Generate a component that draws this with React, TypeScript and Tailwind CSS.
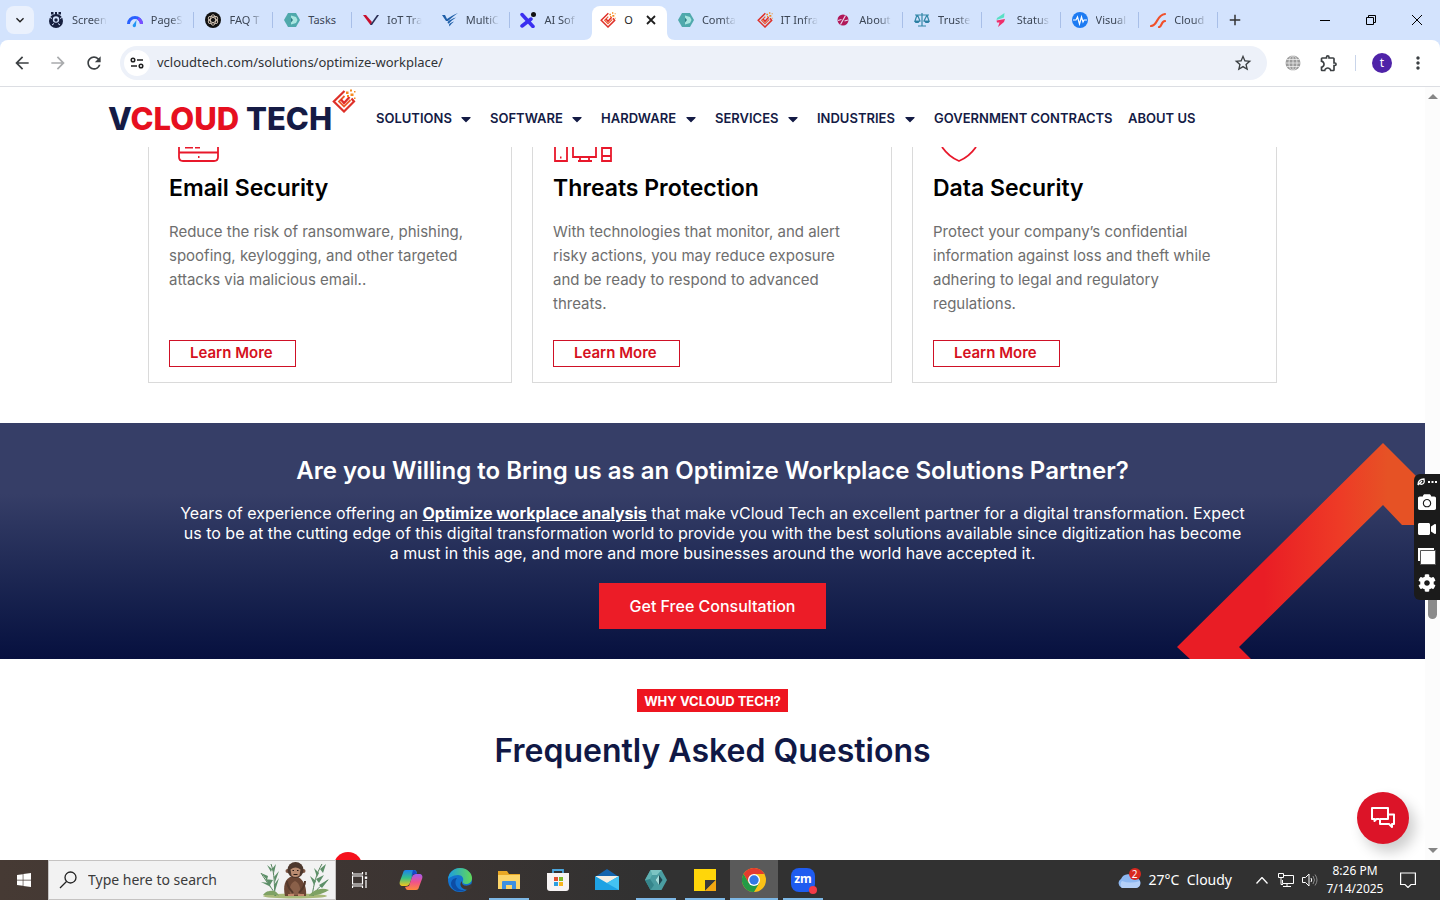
import type { ReactNode } from "react"
import { FaCamera, FaCaretDown, FaCog, FaVideo, FaWindows } from "react-icons/fa"
import { MdAdd, MdArrowBack, MdArrowForward, MdKeyboardArrowDown, MdMoreVert, MdOutlineExtension, MdRefresh, MdStarBorder } from "react-icons/md"

const DiamondLogo = ({ className }: { className: string }) => (
  <svg viewBox="0 0 24 24" className={className} fill="none">
    <path d="M12.500 2 1.800 12.500 12 22.500l10-10-2.500-3" stroke="#de3029" strokeWidth="2.200" />
    <path d="M12.500 7 7 12.500l5 5 6.500-6.500" stroke="#ee5a2a" strokeWidth="1.800" />
    <path d="m9 10.500 3 3.500 5.500-6" stroke="#e02a28" strokeWidth="2.200" />
    <path d="M14 2.500h2.500V5H14zM18 .5h2v2h-2zM18.500 4.500h3V7h-3zM15 6h2v2h-2zM22 2h1.500v1.500H22zM22 8.500h1.500V10H22z" fill="#f58a1f" />
  </svg>
)

const HexLogo = ({ className }: { className: string }) => (
  <svg viewBox="0 0 24 24" className={className}>
    <path d="M6.500 2h11L23 12l-5.500 10h-11L1 12z" fill="#4a9da1" />
    <path d="M1 12l5-1 4 6-3.500 5z" fill="#35858b" />
    <path d="M6.500 2h11L13 7H8z" fill="#7cc4c3" />
    <path d="M6.500 2 1 12l5-1 2-4z" fill="#5eb0b1" />
    <path d="m15 7 3.500 5-3.500 5-3.500-5z" fill="#1f4650" />
    <path d="M15 7v10l-3.500-5z" fill="#a5dedb" />
  </svg>
)

const icons: Record<string, ReactNode> = {
  paw: <svg viewBox="0 0 16 16" className="size-4"><circle cx="8" cy="9" r="7" fill="#17203f" /><circle cx="8" cy="7.500" r="3.200" fill="#d3e3fd" /><circle cx="8" cy="8" r="1.700" fill="#17203f" /><path d="M3 0h2.500v2.500H3zM7 0h2v3H7zM10.500 0H13v2.500h-2.500z" fill="#17203f" /><path d="m1 5 3 1.500M15 5l-3 1.500M4 13l2-1.500M12 13l-2-1.500" stroke="#d3e3fd" /></svg>,
  speed: <svg viewBox="0 0 16 16" className="size-4"><path d="M1.500 12a6.500 6.500 0 0 1 13 0" fill="none" stroke="#2962ff" strokeWidth="3" /><path d="M11 6.500a6.500 6.500 0 0 1 3.500 5.500" fill="none" stroke="#7c4dff" strokeWidth="3" /><path d="m9.500 8-3 4a1.700 1.700 0 1 0 2.500 1z" fill="#2196f3" /></svg>,
  gpt: <svg viewBox="0 0 16 16" className="size-4"><circle cx="8" cy="8" r="8" fill="#111" /><g fill="none" stroke="#d9c9b8" strokeWidth=".9"><ellipse cx="8" cy="8" rx="2.500" ry="5.200" /><ellipse cx="8" cy="8" rx="2.500" ry="5.200" transform="rotate(60 8 8)" /><ellipse cx="8" cy="8" rx="2.500" ry="5.200" transform="rotate(120 8 8)" /></g></svg>,
  hex: <svg viewBox="0 0 16 16" className="size-4"><path d="M4 1h8l4 7-4 7H4L0 8z" fill="#4fa9ac" /><path d="M7 3.500 12 5l1.500 3-1.500 3-5 1.500z" fill="#a9e6e0" /><path d="m7 5.500 2 2.500-2 2.500z" fill="#2f7d84" /></svg>,
  vee: <svg viewBox="0 0 16 16" className="size-4"><path d="M0 3h3l6 7-1.500 3z" fill="#c8102e" /><path d="M7 13 14 3h2l-7 10z" fill="#2a2f55" /></svg>,
  wing: <svg viewBox="0 0 16 16" className="size-4" fill="#1f5fa8"><path d="M0 3h3l2 4C8 5 11 3 16 1c-4 3-7 5-10 8H4z" /><path d="M5.500 10c2-2 5-3.500 8.500-4.500C11 7.500 9 9 7 11.500H6z" /><path d="M7 12.500c1-1.500 3-2.500 5-3-2 1.500-3 3-4.500 5z" /></svg>,
  ex: <svg viewBox="0 0 16 16" className="size-4"><path d="m2 2.500 11 12M11 7 2 14" stroke="#3a2ff0" strokeWidth="3.500" strokeLinecap="round" /><circle cx="13.500" cy="2.500" r="2.500" fill="#111" /></svg>,
  diamond: <DiamondLogo className="size-4" />,
  ball: <svg viewBox="0 0 16 16" className="size-4"><circle cx="8" cy="8" r="5.500" fill="#b01657" /><path d="m5.500 12.500 5-9M3 8.500l3.500-1M9.500 9l3.500-1" stroke="#e9d6ee" strokeWidth="1.200" /></svg>,
  scales: <svg viewBox="0 0 16 16" className="size-4"><path d="M8 1v13M1 3h14M4 14h8M3 3 1 9h5L3.500 3M13 3l-3 6h5l-2-6" fill="none" stroke="#3387a8" strokeWidth="1.200" /><path d="M0 9h6l-1.500 2h-3zM10 9h6l-1.500 2h-3z" fill="#2b7fa3" /></svg>,
  bolt: <svg viewBox="0 0 16 16" className="size-4"><path d="M11.500 1 4 6l-.5 2L11 5.500z" fill="#59e0c5" /><path d="M3.500 8.500 12 7l-1 3-6 5 1.500-4.500H4z" fill="#ef2f6b" /></svg>,
  pulse: <svg viewBox="0 0 16 16" className="size-4"><circle cx="8" cy="8" r="8" fill="#1d7bf2" /><path d="M1 8h3l1.500-3 2 7L9.500 5l1.500 5 1-2h3" fill="none" stroke="#fff" strokeWidth="1.200" /></svg>,
  slash: <svg viewBox="0 0 16 16" className="size-4"><path d="M1 14c7 0 5-11 14-12M9 15c3 0 2-6 6-6" fill="none" stroke="#f0502a" strokeWidth="2.200" strokeLinecap="round" /></svg>,
}

const tabs = [
  { title: "Screen", icon: "paw" },
  { title: "PageS", icon: "speed" },
  { title: "FAQ T", icon: "gpt" },
  { title: "Tasks", icon: "hex", short: true },
  { title: "IoT Tra", icon: "vee" },
  { title: "MultiC", icon: "wing" },
  { title: "AI Sof", icon: "ex" },
  { title: "O", icon: "diamond", active: true },
  { title: "Comta", icon: "hex" },
  { title: "IT Infra", icon: "diamond" },
  { title: "About", icon: "ball" },
  { title: "Truste", icon: "scales" },
  { title: "Status", icon: "bolt" },
  { title: "Visual", icon: "pulse" },
  { title: "Cloud", icon: "slash" },
]

const TabStrip = () => (
  <div className="flex h-10 shrink-0 items-center bg-[#d3e3fd]">
    <button aria-label="Search tabs" className="ml-1.5 flex size-7 shrink-0 items-center justify-center rounded-lg bg-[#eaf1fd]">
      <MdKeyboardArrowDown className="size-4 text-[#1f1f1f]" />
    </button>
    <ul className="ml-[3px] flex h-full min-w-0 flex-1">
      {tabs.map((tab, i) => tab.active ? (
        <li key={i} className="flex min-w-0 flex-1 items-end">
          <div className="relative ml-1 flex h-[34px] min-w-0 flex-1 items-center gap-2 rounded-t-lg bg-white pb-1.5 pl-2">
            <svg viewBox="0 0 8 8" className="absolute bottom-0 -left-2 size-2"><path d="M8 0v8H0c5 0 8-3 8-8" fill="#fff" /></svg>
            <svg viewBox="0 0 8 8" className="absolute -right-2 bottom-0 size-2"><path d="M0 0v8h8C3 8 0 5 0 0" fill="#fff" /></svg>
            <span className="shrink-0">{icons[tab.icon]}</span>
            <span className="w-2.5 text-[11px] text-[#1f1f1f]">{tab.title}</span>
            <button aria-label="Close tab" className="ml-1 shrink-0">
              <svg viewBox="0 0 10 10" className="size-2.5"><path d="m1 1 8 8M9 1 1 9" stroke="#1f1f1f" strokeWidth="1.800" /></svg>
            </button>
          </div>
        </li>
      ) : (
        <li key={i} className="flex min-w-0 flex-1 items-center">
          <span className="ml-[11px] shrink-0">{icons[tab.icon]}</span>
          <span className={tab.short ? "ml-2 flex-1 text-[11px] whitespace-nowrap text-[#3c4655]" : "ml-2 flex-1 mask-r-from-60% text-[11px] whitespace-nowrap text-[#3c4655]"}>
            {tab.title}
          </span>
          <span className={i === 6 ? "ml-2.5 w-px" : "ml-2.5 h-4 w-px bg-[#a8bfe8]"} />
        </li>
      ))}
    </ul>
    <button aria-label="New tab" className="ml-2 shrink-0"><MdAdd className="size-[18px] text-[#333]" /></button>
    <div className="ml-[58px] flex w-[138px] shrink-0 text-black">
      <button aria-label="Minimize" className="flex flex-1 justify-center"><svg viewBox="0 0 10 10" className="size-2.5"><path d="M0 5.500h10" stroke="currentColor" /></svg></button>
      <button aria-label="Restore" className="flex flex-1 justify-center"><svg viewBox="0 0 10 10" className="size-2.5" fill="none" stroke="currentColor"><path d="M.5 2.500h7v7h-7zM2.500 2.500v-2h7v7h-2" /></svg></button>
      <button aria-label="Close" className="flex flex-1 justify-center"><svg viewBox="0 0 10 10" className="size-2.5"><path d="m0 0 10 10M10 0 0 10" stroke="currentColor" /></svg></button>
    </div>
  </div>
)

const Toolbar = () => (
  <div className="shrink-0 bg-[#d3e3fd]">
    <div className="flex h-[47px] items-center rounded-t-lg border-b border-[#dcdee3] bg-white px-3 text-[#3c4043]">
      <button aria-label="Back" className="mr-4"><MdArrowBack className="size-5" /></button>
      <button aria-label="Forward" className="mr-4"><MdArrowForward className="size-5 text-[#a9abad]" /></button>
      <button aria-label="Reload" className="mr-4"><MdRefresh className="size-5" /></button>
      <div className="flex h-[34px] flex-1 items-center rounded-full bg-[#edf1f9] pr-3.5 pl-1">
        <button aria-label="Site information" className="flex size-[26px] items-center justify-center rounded-full bg-white">
          <svg viewBox="0 0 14 14" className="size-3.5" fill="none" stroke="#1f1f1f" strokeWidth="1.500"><circle cx="3" cy="4" r="1.800" /><path d="M7 4h6M1 10h6" /><circle cx="11" cy="10" r="1.800" /></svg>
        </button>
        <input aria-label="Address" defaultValue="vcloudtech.com/solutions/optimize-workplace/" className="ml-[7px] flex-1 text-[13px] text-[#303236] outline-none" />
        <button aria-label="Bookmark"><MdStarBorder className="size-5" /></button>
      </div>
      <button aria-label="Translate" className="ml-[18px]">
        <svg viewBox="0 0 16 16" className="size-4"><circle cx="8" cy="8" r="7.500" fill="#9b9b9b" /><path d="M8 0v16M0 8h16M1.500 4.500h13M1.500 11.500h13" stroke="#eee" strokeWidth=".8" /><ellipse cx="8" cy="8" rx="4" ry="7.500" fill="none" stroke="#eee" strokeWidth=".8" /></svg>
      </button>
      <button aria-label="Extensions" className="ml-[18px]"><MdOutlineExtension className="size-5" /></button>
      <span className="ml-4 h-4 w-px bg-[#c9d5ea]" />
      <button aria-label="Profile" className="mx-4 size-5 rounded-full bg-[#4f23a8] text-xs leading-5 text-white">t</button>
      <button aria-label="Menu"><MdMoreVert className="size-5" /></button>
    </div>
  </div>
)

const navItems = [
  { label: "SOLUTIONS", menu: true },
  { label: "SOFTWARE", menu: true },
  { label: "HARDWARE", menu: true },
  { label: "SERVICES", menu: true },
  { label: "INDUSTRIES", menu: true },
  { label: "GOVERNMENT CONTRACTS" },
  { label: "ABOUT US" },
]

const SiteHeader = () => (
  <header className="flex h-[60px] shrink-0 items-center pt-1 pl-[108px]">
    <a href="#" className="flex w-[268px] shrink-0 items-center text-[31px] font-extrabold whitespace-nowrap text-[#151b45]">
      <span>V<span className="text-[#e6101f]">CLOUD</span> TECH</span>
      <DiamondLogo className="mb-9 size-6 shrink-0" />
    </a>
    <nav className="grid grid-cols-[114px_111px_114px_102px_117px_194px_auto] text-[13px] font-semibold whitespace-nowrap text-[#141b45]">
      {navItems.map(item => (
        <a key={item.label} href="#" className="flex items-center justify-between pr-4">
          {item.label}
          {item.menu && <FaCaretDown className="size-4" />}
        </a>
      ))}
    </nav>
  </header>
)

const cards = [
  {
    title: "Email Security",
    lines: ["Reduce the risk of ransomware, phishing,", "spoofing, keylogging, and other targeted", "attacks via malicious email.."],
    icon: <path d="M10 0v10q0 4 4 4h31q4 0 4-4V0M10 5.500h39M16 .5h8M26 .5h5M29 10h1.500" />,
  },
  {
    title: "Threats Protection",
    lines: ["With technologies that monitor, and alert", "risky actions, you may reduce exposure", "and be ready to respond to advanced", "threats."],
    icon: <path d="M2 0v14h12V0M7 10.500h1.500M20 0v10h23V0M27 10v4M36 10v4M25 14h14M49 0v14h9V0M49 1h9M49 9h9" />,
  },
  {
    title: "Data Security",
    lines: ["Protect your company’s confidential", "information against loss and theft while", "adhering to legal and regulatory", "regulations."],
    icon: <path d="M9 0q7 10 17 14 10-4 17-14" />,
  },
]

const Cards = () => (
  <section className="mx-auto mb-10 grid w-full max-w-[1129px] shrink-0 grid-cols-[364fr_360fr_365fr] gap-5">
    {cards.map(card => (
      <article key={card.title} className="flex flex-col items-start border-x border-b border-[#dadada] px-5 pb-[15px]">
        <svg viewBox="0 0 60 16" className="h-4 w-15" fill="none" stroke="#e8182b" strokeWidth="1.800">{card.icon}</svg>
        <h3 className="mt-[9px] text-[23px] leading-8 font-semibold whitespace-nowrap text-black">{card.title}</h3>
        <p className="mt-4 h-[120px] text-[15px] leading-6 whitespace-nowrap text-[#6e6e6e]">
          {card.lines.map(line => <span key={line} className="block">{line}</span>)}
        </p>
        <a href="#" className="flex h-[27px] w-[127px] items-center border border-[#cf1126] pl-5 text-[15px] font-semibold whitespace-nowrap text-[#d51020]">Learn More</a>
      </article>
    ))}
  </section>
)

const Banner = () => (
  <section className="relative flex shrink-0 flex-col items-center bg-linear-to-b from-[#363e67] from-30% to-[#07103f] pt-8 pb-[30px] text-center text-white">
    <svg viewBox="0 0 248 216" className="absolute right-0 bottom-0 h-[216px] w-[248px]">
      <linearGradient id="arrow">
        <stop offset=".35" stopColor="#e91d25" />
        <stop offset=".65" stopColor="#ee3a26" />
        <stop offset=".85" stopColor="#e65225" />
      </linearGradient>
      <path d="m206 0 42 42v40h-23l-19-20L62 204l12 12H13L0 204z" fill="url(#arrow)" />
    </svg>
    <h2 className="text-2xl font-semibold">Are you Willing to Bring us as an Optimize Workplace Solutions Partner?</h2>
    <p className="relative mt-4 text-base leading-5 whitespace-nowrap">
      Years of experience offering an <a href="#" className="font-bold underline">Optimize workplace analysis</a> that make vCloud Tech an excellent partner for a digital transformation. Expect<br />
      us to be at the cutting edge of this digital transformation world to provide you with the best solutions available since digitization has become<br />
      a must in this age, and more and more businesses around the world have accepted it.
    </p>
    <button className="mt-5 h-[46px] w-[227px] bg-[#ec1c27] text-base font-medium">Get Free Consultation</button>
  </section>
)

const Faq = () => (
  <section className="flex flex-col items-center pt-[30px]">
    <span className="h-[23px] w-[151px] bg-[#ee1520] text-center text-[13px] leading-6 font-bold whitespace-nowrap text-white">WHY VCLOUD TECH?</span>
    <h2 className="mt-[19px] text-[32px] leading-10 font-semibold text-[#101845]">Frequently Asked Questions</h2>
  </section>
)

const CaptureWidget = () => (
  <div className="absolute top-[387px] right-0 flex h-[126px] w-[26px] flex-col items-center gap-[9px] rounded-l-md bg-[#1b1b1b] pt-1 text-white">
    <svg viewBox="0 0 20 8" className="-mb-0.5 h-2 w-5 shrink-0"><path d="M1 7c0-4 2-6 6-6 1 4-1 6-4 5M1 7l4-4" stroke="#fff" fill="none" strokeWidth="1.300" /><path d="M11 3h2v2h-2zM14.500 3h2v2h-2zM18 3h2v2h-2z" fill="#fff" /></svg>
    <button aria-label="Screenshot"><FaCamera className="size-[18px]" /></button>
    <button aria-label="Record"><FaVideo className="size-[18px]" /></button>
    <button aria-label="Gallery">
      <svg viewBox="0 0 18 18" className="size-[18px]"><path d="M0 1h16v13H0z" fill="#fff" /><path d="M2.500 3.500h15v14h-15z" fill="#fff" stroke="#555" /></svg>
    </button>
    <button aria-label="Settings"><FaCog className="size-[18px]" /></button>
  </div>
)

const Viewport = () => (
  <main className="relative flex min-h-0 flex-1 overflow-hidden bg-white font-[Inter,sans-serif]">
    <div className="relative flex min-w-0 flex-1 flex-col overflow-hidden">
      <SiteHeader />
      <Cards />
      <Banner />
      <Faq />
      <span className="absolute -bottom-5 left-[334px] size-7 rounded-full bg-[#f5101c]" />
      <button aria-label="Open chat" className="absolute right-4 bottom-4 flex size-[52px] items-center justify-center rounded-full bg-[#dc1428] shadow-[6px_8px_14px_rgba(0,0,0,0.2)]">
        <svg viewBox="0 0 24 22" className="h-[22px] w-6" fill="none" stroke="#fff" strokeWidth="2" strokeLinejoin="round"><path d="M8 12H5.500L3.500 14v-2H1V1h16v6" /><path d="M16 7.500h7V17h-2v3l-3-3H9v-5h5" /><path d="M17 7v5h-3" /></svg>
      </button>
    </div>
    <div className="flex w-[15px] shrink-0 flex-col items-center justify-between bg-[#fcfcfc] py-[7px]">
      <svg viewBox="0 0 10 5" className="h-[5px] w-2.5"><path d="m5 0 5 5H0z" fill="#858585" /></svg>
      <span className="mt-[250px] h-10 w-[9px] rounded-full bg-[#8b8b8b]" />
      <svg viewBox="0 0 10 5" className="h-[5px] w-2.5"><path d="m5 5 5-5H0z" fill="#858585" /></svg>
    </div>
    <CaptureWidget />
  </main>
)

const apps = [
  {
    name: "Copilot",
    icon: <svg viewBox="0 0 24 24" className="size-6"><linearGradient id="cpa" x2="0" y2="1"><stop stopColor="#1b7ff0" /><stop offset=".5" stopColor="#35c287" /><stop offset="1" stopColor="#f6c51b" /></linearGradient><linearGradient id="cpb" x2="0" y2="1"><stop stopColor="#a35cf0" /><stop offset=".5" stopColor="#f0528b" /><stop offset="1" stopColor="#ff8a3c" /></linearGradient><path d="M7 2h8c2 0 2.500 1 3 3l-4 1-3 9c-1 2-2 3-4 3H4c-3 0-4-2-3-5l3-8c.5-2 1-3 3-3" fill="url(#cpa)" /><path d="M17 22H9c-2 0-2-1-3-3l4-1 3-9c1-2 2-3 4-3h3c3 0 4 2 3 5l-3 8c-.5 2-1 3-3 3" fill="url(#cpb)" /><path d="M14 2c2 0 3 1 4 4h-2c-2 0-3 1-4 4z" fill="#1648c9" /></svg>,
  },
  {
    name: "Edge",
    icon: <svg viewBox="0 0 24 24" className="size-6"><linearGradient id="edg"><stop stopColor="#1b9de2" /><stop offset="1" stopColor="#62d957" /></linearGradient><circle cx="12" cy="12" r="12" fill="#1372cf" /><path d="M0 11C1 4 6 0 12 0c7 0 12 5 12 10 0 4-3 6-6 6-2 0-4-1-3-3 1-3-1-6-5-6-5 0-9 3-10 4" fill="url(#edg)" /><path d="M9 10c-4 5 0 13 8 12-5 3-13 1-14-6 0-4 3-6 6-6" fill="#0d4da5" /><path d="M14 13c-1 5 5 6 9 3l1 4-3 2c-7 0-11-5-7-9" fill="#403632" /></svg>,
  },
  {
    name: "File Explorer", open: true,
    icon: <svg viewBox="0 0 24 24" className="size-6"><path d="M1 3h9l2 3h11v15H1z" fill="#e9a825" /><path d="M1 7h22v14H1z" fill="#fcd56a" /><path d="M5 21v-7q0-1 1-1h12q1 0 1 1v7h-4v-4H9v4z" fill="#3d8fe0" /></svg>,
  },
  {
    name: "Store",
    icon: <svg viewBox="0 0 24 24" className="size-6"><path d="M7 6V2h10v4" fill="none" stroke="#4ba6dd" strokeWidth="1.800" /><path d="M1 5h22v15q0 3-3 3H4q-3 0-3-3z" fill="#f7f4f4" /><path d="M8 9h4v4H8z" fill="#e2502f" /><path d="M13 9h4v4h-4z" fill="#7fba2a" /><path d="M8 14h4v4H8z" fill="#2c9fe0" /><path d="M13 14h4v4h-4z" fill="#f8b51d" /></svg>,
  },
  {
    name: "Mail",
    icon: <svg viewBox="0 0 24 24" className="size-6"><path d="M0 9 12 1l12 8v13H0z" fill="#1464ad" /><path d="M1 8h22v8H1z" fill="#f5efe4" /><path d="M0 8v14h24V8l-12 7z" fill="#1ea2e4" /><path d="M24 8v14L9 13.500l3 1.500z" fill="#43c2f2" /></svg>,
  },
  { name: "Comtask", open: true, icon: <HexLogo className="size-6" /> },
  {
    name: "Sticky Notes", open: true,
    icon: <svg viewBox="0 0 24 24" className="size-6"><path d="M1 1h22v22H1z" fill="#ffd60a" /><path d="M12 12h11L12 23z" fill="#3a3a3a" /><path d="M23 12v11H12z" fill="#f3a812" /></svg>,
  },
  {
    name: "Chrome", open: true, active: true,
    icon: <svg viewBox="0 0 24 24" className="size-6"><circle cx="12" cy="12" r="12" fill="#fbc116" /><path d="M1.600 6a12 12 0 0 1 20.800 0H12l-5.200 9z" fill="#e33b2e" /><path d="M1.600 6a12 12 0 0 0 10.400 18l5.200-9H6.800z" fill="#249a46" /><circle cx="12" cy="12" r="6" fill="#fff" /><circle cx="12" cy="12" r="4.700" fill="#3478e5" /></svg>,
  },
  {
    name: "Zoom", open: true,
    icon: <span className="relative flex size-6 items-center justify-center rounded-lg bg-[#1f5cf0] pb-0.5 text-xs font-bold text-white">zm<span className="absolute -right-0.5 -bottom-0.5 size-2 rounded-full bg-[#f43b48]" /></span>,
  },
]

const Monkey = () => (
  <svg viewBox="0 0 72 38" className="mr-1 h-[38px] w-[72px] shrink-0" fill="none">
    <ellipse cx="36" cy="35" rx="32" ry="2.500" fill="#a9b979" />
    <path d="M16 35C15 24 16 13 12 3M17 35C14 28 8 22 2 12M53 35c2-12 4-22 10-32M54 35c4-8 10-12 15-16" stroke="#56835c" />
    <g fill="#5d8f68">
      <path d="m2 12 7 3-1 4zM6 18l8 1-3 5zM2 21l8 1 2 4zM13 8l4-5-2 9zM13 8 8 4l4 7zM15 16l5-6-4 11zM15 24l5-7-4 13z" />
      <path d="m61 8 6-5-3 9zM60 12l-5-5 3 9zM57 18l8-4-5 8zM57 20l-6-5 4 9zM60 24l10-6-7 9z" />
    </g>
    <path d="M4 34q6-8 14 0M50 34q9-9 20-5-7 5-20 6M10 30q8-1 10 5" fill="#7fa264" />
    <path d="M26 35c-2-9-1-18 8-20 10 0 14 11 13 20z" fill="#6b4634" />
    <path d="M31 34c-1-6 0-12 5-14 5 2 6 9 5 14z" fill="#8a6049" />
    <circle cx="28.500" cy="10" r="2" fill="#7d5644" />
    <circle cx="44.500" cy="10" r="2" fill="#7d5644" />
    <circle cx="36.500" cy="9" r="8" fill="#4d382e" />
    <path d="M31.500 8.500q5-4 10 0l-1 6q-4 3-8 0z" fill="#b98b70" />
    <path d="M33.500 9.500h1.500M38 9.500h1.500M34.500 13.500h4" stroke="#2b1c17" />
    <path d="M28 20c0 6 3 8 6 12M46 20c0 6-3 8-6 12" stroke="#54382a" strokeWidth="2" />
    <path d="M29 34h6M39 34h6" stroke="#c1876b" strokeWidth="2" />
  </svg>
)

const Taskbar = () => (
  <footer className="flex h-10 shrink-0 items-stretch bg-linear-to-r from-[#463a34] via-[#3b3432] via-30% to-[#313131] to-45% text-white">
    <button aria-label="Start" className="flex w-12 items-center justify-center"><FaWindows className="size-4" /></button>
    <label className="flex w-72 items-center border border-[#c5c3c2] bg-[#f2f2f2] pl-2.5">
      <svg viewBox="0 0 18 18" className="size-[18px] shrink-0" fill="none" stroke="#222" strokeWidth="1.300"><circle cx="11.500" cy="6.500" r="5.500" /><path d="M7.500 10.500 1 17" /></svg>
      <input aria-label="Search" placeholder="Type here to search" className="ml-[11px] min-w-0 flex-1 text-sm outline-none placeholder:text-[#3b3b3b]" />
      <Monkey />
    </label>
    <button aria-label="Task view" className="flex w-12 items-center justify-center">
      <svg viewBox="0 0 16 16" className="size-4" fill="none" stroke="#fff" strokeWidth="1.200"><path d="M.5 4h10v8H.5zM.5 0v2h10V0M.5 16v-2h10v2M14 0v3M14 8v8" /><path d="M12.800 4.500h2.400v2.400h-2.400z" fill="#fff" stroke="none" /></svg>
    </button>
    <div className="ml-[3px] flex gap-px">
      {apps.map(app => (
        <button
          key={app.name}
          aria-label={app.name}
          className={app.active ? "relative flex w-12 items-center justify-center bg-[#5a5a5a]" : "relative flex w-12 items-center justify-center"}
        >
          {app.icon}
          {app.open && <span className={app.active ? "absolute inset-x-0 bottom-0 h-0.5 bg-[#7db8e6]" : "absolute inset-x-1 bottom-0 h-0.5 bg-[#7db8e6]"} />}
        </button>
      ))}
    </div>
    <div className="ml-auto flex items-center pr-6">
      <button className="flex items-center text-sm">
        <span className="relative mr-2">
          <svg viewBox="0 0 24 16" className="h-4 w-6"><path d="M5 16a5 5 0 0 1-1-9 8 8 0 0 1 14-1 5 5 0 0 1 1 10z" fill="#8db8f2" /><path d="M5 16a5 5 0 0 1 0-7q8 3 18 0 1 6-4 7z" fill="#b4d0f8" /></svg>
          <span className="absolute -top-1 right-0 size-3 rounded-full bg-[#d9281f] text-center text-[10px] leading-3">2</span>
        </span>
        27°C&nbsp; Cloudy
      </button>
      <svg viewBox="0 0 12 7" className="ml-6 h-[7px] w-3" fill="none" stroke="#fff" strokeWidth="1.300"><path d="m.5 6.500 5.500-6 5.500 6" /></svg>
      <svg viewBox="0 0 16 14" className="ml-2.5 h-3.5 w-4" fill="none" stroke="#fff"><path d="M6 2.500h9.500v8H4.500V7M9 10.500v3M5 13.500h8M.5.5h5v4h-5zM3 4.500v7h2" /></svg>
      <svg viewBox="0 0 16 14" className="ml-2 h-3.5 w-4" fill="none" stroke="#fff"><path d="M.5 4.500h3L7 1v12L3.500 9.500h-3zM9 5q1.500 2 0 4" /><path d="M11 3q3 4 0 8M13 1.500q4 5.500 0 11" stroke="#8a8a8a" /></svg>
      <div className="ml-2 w-[58px] text-center text-xs leading-[18px] whitespace-nowrap">8:26 PM<br />7/14/2025</div>
      <svg viewBox="0 0 16 16" className="ml-4 size-4" fill="none" stroke="#fff" strokeWidth="1.200"><path d="M.6 1h14.800v11.500H11L8 15.500l-3-3H.6z" /></svg>
    </div>
  </footer>
)

export default function App() {
  return (
    <div className="flex h-screen flex-col overflow-hidden font-['Noto_Sans','Open_Sans',sans-serif]">
      <TabStrip />
      <Toolbar />
      <Viewport />
      <Taskbar />
    </div>
  )
}
